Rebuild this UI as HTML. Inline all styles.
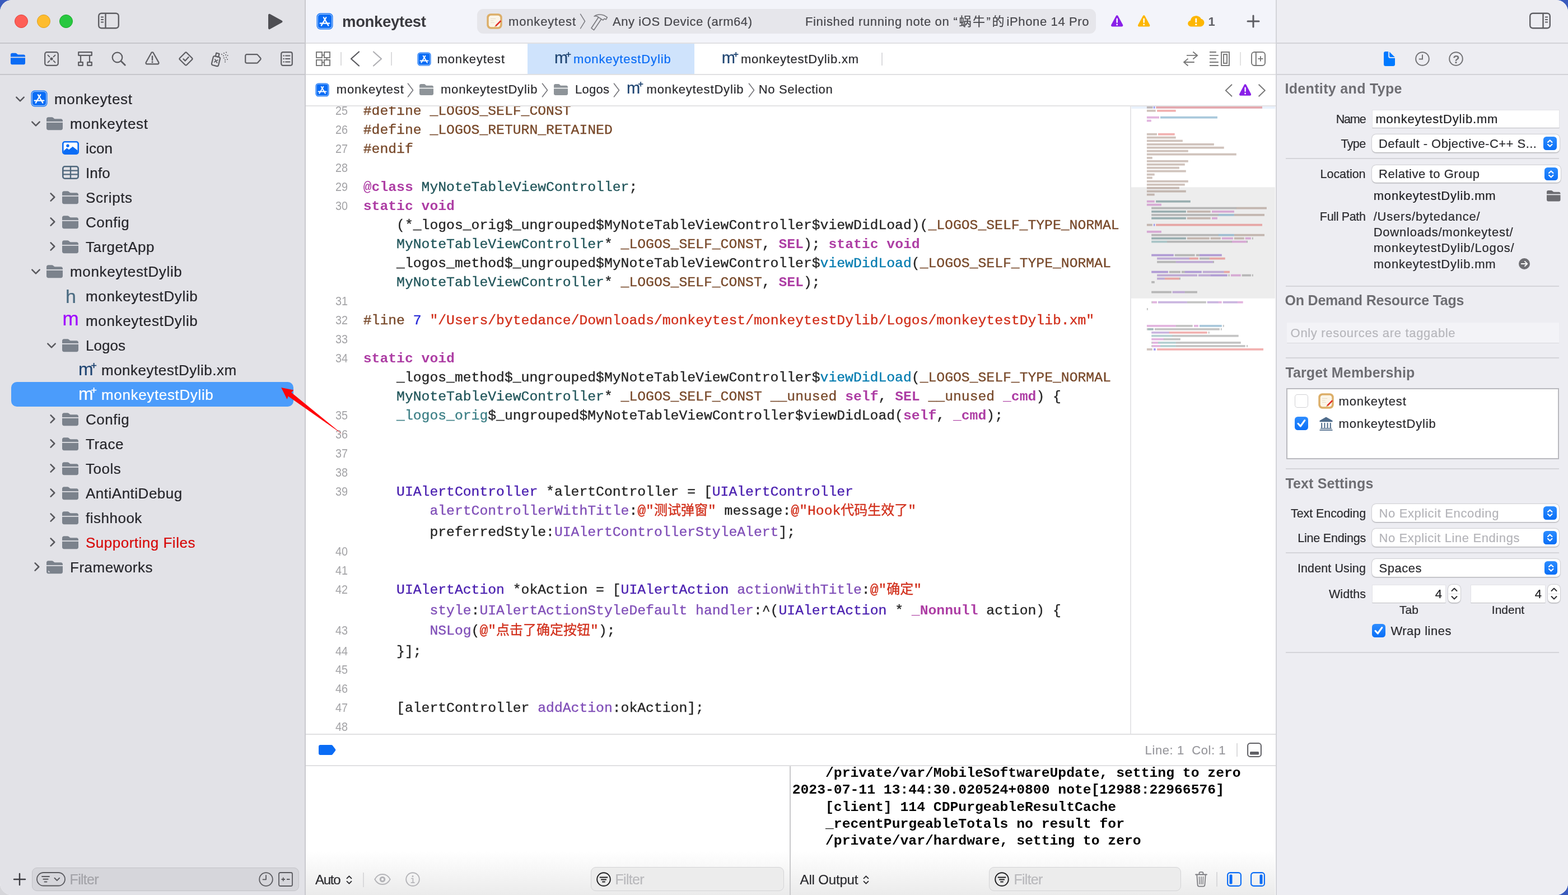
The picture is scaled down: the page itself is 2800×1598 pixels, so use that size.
<!DOCTYPE html>
<html lang="en"><head><meta charset="utf-8"><title>monkeytest — monkeytestDylib.mm</title>
<style>
:root{--mono:"Liberation Mono","Noto Sans CJK SC",monospace;}
html,body{margin:0;padding:0;}
body{width:2800px;height:1598px;overflow:hidden;position:relative;background:#3a5bbd;font-family:"Liberation Sans","Noto Sans CJK SC",sans-serif;}
#win{position:absolute;left:0;top:0;width:2800px;height:1598px;border-radius:21px;overflow:hidden;background:#fff;will-change:transform;}
#win div,#win span.t,#win svg{position:absolute;}
#win div{box-sizing:border-box;}
.t{white-space:pre;-webkit-text-stroke:0.220px;}
svg{overflow:visible;}
.code{font-family:var(--mono);font-size:24.72px;line-height:34px;white-space:pre;color:#262626;height:34px;-webkit-text-stroke:0.35px;}
.code span{position:static;}
.ln{font-size:22.500px;line-height:34px;color:#a3a3a6;text-align:right;width:60px;left:560.500px;transform:scaleX(0.880);transform-origin:100% 50%;}
.k{color:#ad3da4;font-weight:bold;-webkit-text-stroke:0;}
.p{color:#78492a;}
.c{color:#23575c;}
.f{color:#3e8087;}
.d{color:#047cb0;}
.s{color:#d12f1b;}
.n{color:#272ad8;}
.oc{color:#4b21b0;}
.of{color:#804fb8;}
.zh{font-size:24px;}
.con{font-family:var(--mono);font-size:24.72px;line-height:30px;white-space:pre;color:#000;font-weight:bold;}
</style></head><body><div style="position:absolute;left:0;top:1572px;width:26px;height:26px;background:#d6d6da;"></div><div id="win">
<div style="left:0px;top:0px;width:544px;height:1598px;background:#e2e2e7;"></div>
<div style="left:544px;top:0px;width:2px;height:1598px;background:#c9c9ce;"></div>
<div style="left:546px;top:0px;width:1732px;height:77px;background:#f3f4fa;"></div>
<div style="left:546px;top:77px;width:1732px;height:1521px;background:#fff;"></div>
<div style="left:2278px;top:0px;width:522px;height:1598px;background:#ededf2;"></div>
<div style="left:2278px;top:0px;width:2px;height:1598px;background:#d3d4d9;"></div>
<div style="left:0px;top:76px;width:544px;height:2px;background:#c6c6cb;"></div>
<div style="left:0px;top:132px;width:544px;height:2px;background:#c6c6cb;"></div>
<div style="left:546px;top:76px;width:1732px;height:2px;background:#e0e0e3;"></div>
<div style="left:546px;top:132px;width:1732px;height:2px;background:#e0e0e2;"></div>
<div style="left:546px;top:188px;width:1732px;height:2px;background:#e3e3e5;"></div>
<div style="left:2279px;top:76px;width:521px;height:2px;background:#d2d2d7;"></div>
<div style="left:2279px;top:132px;width:521px;height:2px;background:#d2d2d7;"></div>
<div style="left:26px;top:26px;width:24px;height:24px;border-radius:50%;background:#fe5f57;border:1px solid #e0443e;"></div>
<div style="left:66px;top:26px;width:24px;height:24px;border-radius:50%;background:#febc2e;border:1px solid #dea123;"></div>
<div style="left:106px;top:26px;width:24px;height:24px;border-radius:50%;background:#28c840;border:1px solid #1aab29;"></div>
<svg style="left:175px;top:22px;" width="38" height="30" viewBox="0 0 38 30"><rect x="1.2" y="1.7" width="35.6" height="26.6" rx="5" fill="none" stroke="#5e5e63" stroke-width="2.4"/><path d="M13.5 2v26" stroke="#5e5e63" stroke-width="2.4"/><path d="M5 8.5h5M5 13h5M5 17.5h5" stroke="#5e5e63" stroke-width="1.8"/></svg>
<svg style="left:478px;top:23.5px;" width="28" height="29" viewBox="0 0 28 29"><path d="M1 2.800c0-1.700 1.700-2.600 3.100-1.800l21.300 11.800c1.500.8 1.500 2.700 0 3.500L4.100 28.100c-1.400.8-3.100-.1-3.100-1.800z" fill="#4e4e53"/></svg>
<svg style="left:565px;top:23px;" width="30" height="30" viewBox="0 0 30 30"><rect x="0.5" y="0.5" width="29" height="29" rx="6.5" fill="#0a6cf5"/>
<rect x="2.3" y="2.3" width="25.4" height="25.4" rx="4.8" fill="none" stroke="#9cc6fb" stroke-width="1.3"/>
<g stroke="#fff" stroke-width="2.2" stroke-linecap="round" fill="none"><path d="M17.3 8.2 8.8 22.6"/><path d="M12.9 8.2 21.4 22.6"/><path d="M6.6 18.6h16.8"/></g></svg>
<span class="t" id="t0" style="top:20.97px;font-size:27.5px;line-height:36px;color:#3a3a3f;font-weight:700;-webkit-text-stroke:0;letter-spacing:-0.316px;left:611px;">monkeytest</span>
<div style="left:852px;top:16px;width:1105px;height:44px;background:#e6e6eb;border-radius:11px;"></div>
<svg style="left:869px;top:24px;" width="28" height="28" viewBox="0 0 28 28"><rect x="0.300" y="0.300" width="27.400" height="27.400" rx="7" fill="#dcae68"/>
<rect x="3.700" y="3.700" width="20.600" height="20.600" rx="4.200" fill="#fbf5e8"/>
<path d="M7.500 9.500h9M7.500 13h5M7.500 16.500h6.500" stroke="#dccfb6" stroke-width="1" stroke-dasharray="1.600 0.700"/>
<path d="M15.200 21.400 24.400 12.200 26.300 14.100 17.100 23.300z" fill="#df2a25"/><path d="M15.200 21.400 17.100 23.300 13.900 24.500z" fill="#d9a660"/></svg>
<span class="t" id="t1" style="top:23.68px;font-size:22px;line-height:29px;color:#47474c;letter-spacing:0.833px;left:908px;">monkeytest</span>
<svg style="left:1035px;top:24px;" width="11" height="28" viewBox="0 0 11 28"><path d="M1.5 1.2 9.5 14.0 1.5 26.8" fill="none" stroke="#7d7d82" stroke-width="1.5" stroke-linecap="round" stroke-linejoin="round"/></svg>
<svg style="left:1054.5px;top:24.5px;" width="31" height="30" viewBox="0 0 31 30"><g fill="none" stroke="#78787d" stroke-width="1.600" stroke-linejoin="round"><path d="M13.800 5.800 0.900 25.200 5.600 28.600 18.800 9"/><path d="M6 4C10 .6 18-.2 24.500 2.800l4.800 3.200-2.200 3.800-2.800-1.400-2.400 2.600-3.200-2-5.100-3.400C12 4 9 3.400 6 4z"/></g></svg>
<span class="t" id="t2" style="top:23.68px;font-size:22px;line-height:29px;color:#47474c;letter-spacing:0.562px;left:1094px;">Any iOS Device (arm64)</span>
<span class="t" id="t3" style="top:23.68px;font-size:22px;line-height:29px;color:#47474c;letter-spacing:0.632px;left:1438px;">Finished running note on</span>
<span class="t" id="t4" style="top:23.68px;font-size:22px;line-height:29px;color:#47474c;letter-spacing:2.586px;left:1702.5px;">“蜗牛”的</span>
<span class="t" id="t5" style="top:23.68px;font-size:22px;line-height:29px;color:#47474c;letter-spacing:0.630px;left:1797.5px;">iPhone 14 Pro</span>
<svg style="left:1984.3px;top:27.4px;" width="21.4" height="20.6" viewBox="0.400 0.700 21.200 19.600" preserveAspectRatio="none"><path d="M9.3 1.8c.8-1.3 2.6-1.3 3.4 0l8.6 15.4c.8 1.4-.2 3-1.7 3H2.4c-1.5 0-2.5-1.6-1.7-3z" fill="#8920e8"/>
<rect x="9.8" y="6" width="2.4" height="8" rx="1.2" fill="#fff"/><circle cx="11" cy="16.8" r="1.4" fill="#fff"/></svg>
<svg style="left:2032.4px;top:27.4px;" width="21.4" height="20.6" viewBox="0.400 0.700 21.200 19.600" preserveAspectRatio="none"><path d="M9.3 1.8c.8-1.3 2.6-1.3 3.4 0l8.6 15.4c.8 1.4-.2 3-1.7 3H2.4c-1.5 0-2.5-1.6-1.7-3z" fill="#fdb600"/>
<rect x="9.8" y="6" width="2.4" height="8" rx="1.2" fill="#fff"/><circle cx="11" cy="16.8" r="1.4" fill="#fff"/></svg>
<svg style="left:2121px;top:27.9px;" width="29.600" height="19.800" viewBox="0.300 0.800 29.400 22.400" preserveAspectRatio="none"><path d="M7.5 23C3.4 23 .5 20.2.5 16.6c0-3 2-5.400 4.800-6.200C5.900 5 9.800 1 15 1c4.200 0 7.700 2.500 9 6.300 3.200.7 5.500 3.700 5.500 7.300 0 4.700-3.400 8.400-7.600 8.400z" fill="#fdb600"/>
<rect x="13.700" y="6" width="2.6" height="9" rx="1.3" fill="#fff"/><circle cx="15" cy="18.600" r="1.700" fill="#fff"/></svg>
<span class="t" id="t6" style="top:24.18px;font-size:22px;line-height:29px;color:#606066;font-weight:700;-webkit-text-stroke:0;left:2157.5px;">1</span>
<svg style="left:2226px;top:26px;" width="24" height="24" viewBox="0 0 24 24"><path d="M12 2v20M2 12h20" stroke="#5c5c62" stroke-width="3" stroke-linecap="round"/></svg>
<svg style="left:2731px;top:22px;" width="38" height="30" viewBox="0 0 38 30"><rect x="1.2" y="1.7" width="35.6" height="26.6" rx="5" fill="none" stroke="#5e5e63" stroke-width="2.4"/><path d="M24.5 2v26" stroke="#5e5e63" stroke-width="2.4"/><path d="M28 8.5h5M28 13h5M28 17.5h5" stroke="#5e5e63" stroke-width="1.8"/></svg>
<svg style="left:19px;top:94px;" width="26" height="22" viewBox="0 0 29 23"><path d="M0 3.200C0 1.400 1.400 0 3.200 0h6.300c1 0 1.900.4 2.600 1.100l1.300 1.300c.5.500 1.100.700 1.800.700h10.600c1.800 0 3.200 1.400 3.200 3.200v1.400H0z" fill="#0a6cf5"/>
<path d="M0 9.600h29v10.200c0 1.800-1.400 3.200-3.200 3.200H3.200C1.400 23 0 21.600 0 19.800z" fill="#0a6cf5"/></svg>
<svg style="left:79px;top:92px;" width="26" height="26" viewBox="0 0 26 26"><rect x="1.200" y="1.200" width="23.600" height="23.600" rx="3.500" fill="none" stroke="#5e5e63" stroke-width="2.200" stroke-linecap="round" stroke-linejoin="round"/><circle cx="13" cy="13" r="2.600" fill="#5e5e63"/><path d="M6.500 6.500l3 3M19.500 6.500l-3 3M6.500 19.500l3-3M19.500 19.500l-3-3" stroke="#5e5e63" stroke-width="1.800" stroke-linecap="round"/></svg>
<svg style="left:139px;top:92px;" width="26" height="26" viewBox="0 0 26 26"><rect x="1.200" y="1.200" width="23.600" height="5.600" fill="none" stroke="#5e5e63" stroke-width="2.200" stroke-linecap="round" stroke-linejoin="round"/><rect x="1.200" y="19.200" width="7.600" height="5.600" fill="none" stroke="#5e5e63" stroke-width="2.200" stroke-linecap="round" stroke-linejoin="round"/><rect x="17.200" y="19.200" width="7.600" height="5.600" fill="none" stroke="#5e5e63" stroke-width="2.200" stroke-linecap="round" stroke-linejoin="round"/><path d="M5 7v12M21 7v12" fill="none" stroke="#5e5e63" stroke-width="2.200" stroke-linecap="round" stroke-linejoin="round"/></svg>
<svg style="left:199px;top:92px;" width="26" height="26" viewBox="0 0 26 26"><circle cx="10.500" cy="10.500" r="8.800" fill="none" stroke="#5e5e63" stroke-width="2.200" stroke-linecap="round" stroke-linejoin="round"/><path d="M17 17l7.300 7.300" stroke="#5e5e63" stroke-width="2.800" stroke-linecap="round"/></svg>
<svg style="left:259px;top:92px;" width="26" height="25" viewBox="0 0 26 25"><path d="M11.300 2.200c.8-1.300 2.600-1.300 3.400 0l9.600 17.200c.7 1.300-.2 2.900-1.700 2.900H3.400c-1.500 0-2.400-1.600-1.700-2.900z" fill="none" stroke="#5e5e63" stroke-width="2.200" stroke-linecap="round" stroke-linejoin="round"/><path d="M13 8.500v6.800" stroke="#5e5e63" stroke-width="2.400" stroke-linecap="round"/><circle cx="13" cy="18.800" r="1.500" fill="#5e5e63"/></svg>
<svg style="left:319px;top:92px;" width="26" height="26" viewBox="0 0 26 26"><path d="M11.500 2.200c.8-.8 2.200-.8 3 0l9.300 9.300c.8.8.8 2.200 0 3l-9.300 9.300c-.8.800-2.200.800-3 0l-9.300-9.300c-.8-.8-.8-2.200 0-3z" fill="none" stroke="#5e5e63" stroke-width="2.200" stroke-linecap="round" stroke-linejoin="round"/><path d="M8.500 13.400l3.200 3.200 6-6.600" fill="none" stroke="#5e5e63" stroke-width="2.200" stroke-linecap="round" stroke-linejoin="round"/></svg>
<svg style="left:377px;top:92px;" width="31" height="27" viewBox="0 0 31 27"><g transform="rotate(14 9 16)"><rect x="2.500" y="9" width="12.500" height="16.500" rx="2.500" fill="none" stroke="#5e5e63" stroke-width="2.200" stroke-linecap="round" stroke-linejoin="round"/><rect x="6" y="3" width="5.500" height="6" fill="none" stroke="#5e5e63" stroke-width="2.200" stroke-linecap="round" stroke-linejoin="round"/><path d="M6.500 14.500l5 5M11.500 14.500l-5 5" stroke="#5e5e63" stroke-width="1.800" stroke-linecap="round"/></g><g fill="#5e5e63"><circle cx="19" cy="5" r="1"/><circle cx="23" cy="3" r="1"/><circle cx="27" cy="1.500" r="1"/><circle cx="22" cy="7.500" r="1"/><circle cx="26" cy="6" r="1"/><circle cx="29.500" cy="7" r="1"/><circle cx="23" cy="11.500" r="1"/><circle cx="27" cy="10.500" r="1"/><circle cx="25" cy="15" r="1"/><circle cx="29" cy="14" r="1"/><circle cx="25" cy="18.500" r="1"/></g></svg>
<svg style="left:437px;top:96px;" width="30" height="18" viewBox="0 0 30 18"><path d="M3.700 1.200h17.600c.8 0 1.500.3 2 .9l4.900 5.600c.6.700.6 1.800 0 2.500l-4.900 5.600c-.5.600-1.200.9-2 .9H3.700c-1.400 0-2.500-1.100-2.500-2.500V3.700c0-1.400 1.100-2.500 2.500-2.500z" fill="none" stroke="#5e5e63" stroke-width="2.200" stroke-linecap="round" stroke-linejoin="round"/></svg>
<svg style="left:501px;top:92px;" width="22" height="26" viewBox="0 0 22 26"><rect x="1.200" y="1.200" width="19.600" height="23.600" rx="3" fill="none" stroke="#5e5e63" stroke-width="2.200" stroke-linecap="round" stroke-linejoin="round"/><path d="M9 7.500h7.500M9 13h7.500M9 18.500h7.500" stroke="#5e5e63" stroke-width="2" stroke-linecap="round"/><path d="M5.200 7.500h.9M5.200 13h.9M5.200 18.500h.9" stroke="#5e5e63" stroke-width="2" stroke-linecap="round"/></svg>
<svg style="left:28px;top:172px;" width="16" height="10" viewBox="0 0 16 10"><path d="M1.300 1.600 8 8.300 14.700 1.600" fill="none" stroke="#58585d" stroke-width="2.500" stroke-linecap="round" stroke-linejoin="round"/></svg>
<svg style="left:54.5px;top:161px;" width="30" height="30" viewBox="0 0 30 30"><rect x="0.5" y="0.5" width="29" height="29" rx="6.5" fill="#0a6cf5"/>
<rect x="2.3" y="2.3" width="25.4" height="25.4" rx="4.8" fill="none" stroke="#9cc6fb" stroke-width="1.3"/>
<g stroke="#fff" stroke-width="2.2" stroke-linecap="round" fill="none"><path d="M17.3 8.2 8.8 22.6"/><path d="M12.9 8.2 21.4 22.6"/><path d="M6.6 18.6h16.8"/></g></svg>
<span class="t" id="t7" style="top:159.59px;font-size:26px;line-height:34px;color:#26262b;letter-spacing:0.672px;left:97px;">monkeytest</span>
<svg style="left:56px;top:216px;" width="16" height="10" viewBox="0 0 16 10"><path d="M1.300 1.600 8 8.300 14.700 1.600" fill="none" stroke="#58585d" stroke-width="2.500" stroke-linecap="round" stroke-linejoin="round"/></svg>
<svg style="left:83px;top:208.7px;" width="29" height="23.4" viewBox="0 0 29 23"><path d="M0 3.200C0 1.400 1.400 0 3.200 0h6.300c1 0 1.900.4 2.600 1.100l1.300 1.300c.5.500 1.100.700 1.800.700h10.600c1.800 0 3.200 1.400 3.200 3.200v1.400H0z" fill="#7b828c"/>
<path d="M0 9.600h29v10.200c0 1.800-1.400 3.200-3.200 3.200H3.200C1.400 23 0 21.600 0 19.800z" fill="#7b828c"/></svg>
<span class="t" id="t8" style="top:203.59px;font-size:26px;line-height:34px;color:#26262b;letter-spacing:0.672px;left:125px;">monkeytest</span>
<svg style="left:110.5px;top:252px;" width="30" height="24" viewBox="0 0 30 24"><rect x="1.300" y="1.300" width="27.400" height="21.400" rx="3.500" fill="#fff" stroke="#0a6cf5" stroke-width="2.600"/>
<path d="M2.500 17.500 8.500 12.300 12 15.200 18.800 9.800 27.500 16.500V20.500c0 1-.8 1.800-1.800 1.800H4.300c-1 0-1.800-.8-1.800-1.800z" fill="#0a6cf5"/><circle cx="10" cy="8.300" r="2.700" fill="#0a6cf5"/></svg>
<span class="t" id="t9" style="top:247.59px;font-size:26px;line-height:34px;color:#26262b;letter-spacing:0.099px;left:153px;">icon</span>
<svg style="left:110.5px;top:296px;" width="30" height="24" viewBox="0 0 30 24"><rect x="1.300" y="1.300" width="27.400" height="21.400" rx="3.500" fill="none" stroke="#50687d" stroke-width="2.600"/>
<path d="M2 8.600h26M2 15.400h26M15 2v20" stroke="#50687d" stroke-width="2.300"/></svg>
<span class="t" id="t10" style="top:291.59px;font-size:26px;line-height:34px;color:#26262b;letter-spacing:0.108px;left:153px;">Info</span>
<svg style="left:89px;top:344px;" width="10" height="16" viewBox="0 0 10 16"><path d="M1.600 1.300 8.300 8 1.600 14.700" fill="none" stroke="#58585d" stroke-width="2.500" stroke-linecap="round" stroke-linejoin="round"/></svg>
<svg style="left:111px;top:340.7px;" width="29" height="23.4" viewBox="0 0 29 23"><path d="M0 3.200C0 1.400 1.400 0 3.200 0h6.300c1 0 1.900.4 2.600 1.100l1.300 1.300c.5.500 1.100.700 1.800.700h10.600c1.800 0 3.200 1.400 3.200 3.200v1.400H0z" fill="#7b828c"/>
<path d="M0 9.600h29v10.200c0 1.800-1.400 3.200-3.200 3.200H3.200C1.400 23 0 21.600 0 19.800z" fill="#7b828c"/></svg>
<span class="t" id="t11" style="top:335.59px;font-size:26px;line-height:34px;color:#26262b;letter-spacing:0.589px;left:153px;">Scripts</span>
<svg style="left:89px;top:388px;" width="10" height="16" viewBox="0 0 10 16"><path d="M1.600 1.300 8.300 8 1.600 14.700" fill="none" stroke="#58585d" stroke-width="2.500" stroke-linecap="round" stroke-linejoin="round"/></svg>
<svg style="left:111px;top:384.7px;" width="29" height="23.4" viewBox="0 0 29 23"><path d="M0 3.200C0 1.400 1.400 0 3.200 0h6.300c1 0 1.900.4 2.600 1.100l1.300 1.300c.5.500 1.100.700 1.800.700h10.600c1.800 0 3.200 1.400 3.200 3.200v1.400H0z" fill="#7b828c"/>
<path d="M0 9.600h29v10.200c0 1.800-1.400 3.200-3.200 3.200H3.200C1.400 23 0 21.600 0 19.800z" fill="#7b828c"/></svg>
<span class="t" id="t12" style="top:379.59px;font-size:26px;line-height:34px;color:#26262b;letter-spacing:0.500px;left:153px;">Config</span>
<svg style="left:89px;top:432px;" width="10" height="16" viewBox="0 0 10 16"><path d="M1.600 1.300 8.300 8 1.600 14.700" fill="none" stroke="#58585d" stroke-width="2.500" stroke-linecap="round" stroke-linejoin="round"/></svg>
<svg style="left:111px;top:428.7px;" width="29" height="23.4" viewBox="0 0 29 23"><path d="M0 3.200C0 1.400 1.400 0 3.200 0h6.300c1 0 1.900.4 2.600 1.100l1.300 1.300c.5.500 1.100.700 1.800.700h10.600c1.800 0 3.200 1.400 3.200 3.200v1.400H0z" fill="#7b828c"/>
<path d="M0 9.600h29v10.200c0 1.800-1.400 3.200-3.200 3.200H3.200C1.400 23 0 21.600 0 19.800z" fill="#7b828c"/></svg>
<span class="t" id="t13" style="top:423.59px;font-size:26px;line-height:34px;color:#26262b;letter-spacing:0.500px;left:153px;">TargetApp</span>
<svg style="left:56px;top:480px;" width="16" height="10" viewBox="0 0 16 10"><path d="M1.300 1.600 8 8.300 14.700 1.600" fill="none" stroke="#58585d" stroke-width="2.500" stroke-linecap="round" stroke-linejoin="round"/></svg>
<svg style="left:83px;top:472.7px;" width="29" height="23.4" viewBox="0 0 29 23"><path d="M0 3.200C0 1.400 1.400 0 3.200 0h6.300c1 0 1.900.4 2.600 1.100l1.300 1.300c.5.500 1.100.700 1.800.700h10.600c1.800 0 3.200 1.400 3.200 3.200v1.400H0z" fill="#7b828c"/>
<path d="M0 9.600h29v10.200c0 1.800-1.400 3.200-3.200 3.200H3.200C1.400 23 0 21.600 0 19.800z" fill="#7b828c"/></svg>
<span class="t" id="t14" style="top:467.59px;font-size:26px;line-height:34px;color:#26262b;letter-spacing:0.648px;left:125px;">monkeytestDylib</span>
<span class="t" id="t15" style="top:506.92px;font-size:34px;line-height:44px;color:#4a6b82;left:117px;">h</span>
<span class="t" id="t16" style="top:511.59px;font-size:26px;line-height:34px;color:#26262b;letter-spacing:0.648px;left:153px;">monkeytestDylib</span>
<span class="t" id="t17" style="top:545.67px;font-size:35px;line-height:46px;color:#a000ff;left:111.5px;letter-spacing:-1px;">m</span>
<span class="t" id="t18" style="top:555.59px;font-size:26px;line-height:34px;color:#26262b;letter-spacing:0.648px;left:153px;">monkeytestDylib</span>
<svg style="left:84px;top:612px;" width="16" height="10" viewBox="0 0 16 10"><path d="M1.300 1.600 8 8.300 14.700 1.600" fill="none" stroke="#58585d" stroke-width="2.500" stroke-linecap="round" stroke-linejoin="round"/></svg>
<svg style="left:111px;top:604.7px;" width="29" height="23.4" viewBox="0 0 29 23"><path d="M0 3.200C0 1.400 1.400 0 3.200 0h6.300c1 0 1.900.4 2.600 1.100l1.300 1.300c.5.500 1.100.700 1.800.700h10.600c1.800 0 3.200 1.400 3.200 3.200v1.400H0z" fill="#7b828c"/>
<path d="M0 9.600h29v10.200c0 1.800-1.400 3.200-3.200 3.200H3.200C1.400 23 0 21.600 0 19.800z" fill="#7b828c"/></svg>
<span class="t" id="t19" style="top:599.59px;font-size:26px;line-height:34px;color:#26262b;letter-spacing:0.039px;left:153px;">Logos</span>
<span class="t" id="t20" style="top:638.98px;font-size:31.8px;line-height:41px;color:#1f4572;left:140px;">m</span>
<svg style="left:163.2617px;top:648.24px;" width="9.222" height="9.222" viewBox="0 0 9.222 9.222"><path d="M4.61 0v9.22M0 4.61h9.22" stroke="#1f4572" stroke-width="1.91"/></svg>
<span class="t" id="t21" style="top:643.59px;font-size:26px;line-height:34px;color:#26262b;letter-spacing:0.500px;left:181px;">monkeytestDylib.xm</span>
<div style="left:20px;top:682px;width:504px;height:44px;background:#4b9cfb;border-radius:10px;"></div>
<span class="t" id="t22" style="top:682.98px;font-size:31.8px;line-height:41px;color:#fff;left:140px;">m</span>
<svg style="left:163.2617px;top:692.24px;" width="9.222" height="9.222" viewBox="0 0 9.222 9.222"><path d="M4.61 0v9.22M0 4.61h9.22" stroke="#fff" stroke-width="1.91"/></svg>
<span class="t" id="t23" style="top:687.59px;font-size:26px;line-height:34px;color:#fff;letter-spacing:0.648px;left:181px;">monkeytestDylib</span>
<svg style="left:89px;top:740px;" width="10" height="16" viewBox="0 0 10 16"><path d="M1.600 1.300 8.300 8 1.600 14.700" fill="none" stroke="#58585d" stroke-width="2.500" stroke-linecap="round" stroke-linejoin="round"/></svg>
<svg style="left:111px;top:736.7px;" width="29" height="23.4" viewBox="0 0 29 23"><path d="M0 3.200C0 1.400 1.400 0 3.200 0h6.300c1 0 1.900.4 2.600 1.100l1.300 1.300c.5.500 1.100.700 1.800.700h10.600c1.800 0 3.200 1.400 3.200 3.200v1.400H0z" fill="#7b828c"/>
<path d="M0 9.600h29v10.200c0 1.800-1.400 3.200-3.200 3.200H3.200C1.400 23 0 21.600 0 19.800z" fill="#7b828c"/></svg>
<span class="t" id="t24" style="top:731.59px;font-size:26px;line-height:34px;color:#26262b;letter-spacing:0.500px;left:153px;">Config</span>
<svg style="left:89px;top:784px;" width="10" height="16" viewBox="0 0 10 16"><path d="M1.600 1.300 8.300 8 1.600 14.700" fill="none" stroke="#58585d" stroke-width="2.500" stroke-linecap="round" stroke-linejoin="round"/></svg>
<svg style="left:111px;top:780.7px;" width="29" height="23.4" viewBox="0 0 29 23"><path d="M0 3.200C0 1.400 1.400 0 3.200 0h6.300c1 0 1.900.4 2.600 1.100l1.300 1.300c.5.500 1.100.700 1.800.700h10.600c1.800 0 3.200 1.400 3.200 3.200v1.400H0z" fill="#7b828c"/>
<path d="M0 9.600h29v10.200c0 1.800-1.400 3.200-3.200 3.200H3.200C1.400 23 0 21.600 0 19.800z" fill="#7b828c"/></svg>
<span class="t" id="t25" style="top:775.59px;font-size:26px;line-height:34px;color:#26262b;letter-spacing:0.500px;left:153px;">Trace</span>
<svg style="left:89px;top:828px;" width="10" height="16" viewBox="0 0 10 16"><path d="M1.600 1.300 8.300 8 1.600 14.700" fill="none" stroke="#58585d" stroke-width="2.500" stroke-linecap="round" stroke-linejoin="round"/></svg>
<svg style="left:111px;top:824.7px;" width="29" height="23.4" viewBox="0 0 29 23"><path d="M0 3.200C0 1.400 1.400 0 3.200 0h6.300c1 0 1.900.4 2.600 1.100l1.300 1.300c.5.500 1.100.700 1.800.700h10.600c1.800 0 3.200 1.400 3.200 3.200v1.400H0z" fill="#7b828c"/>
<path d="M0 9.600h29v10.200c0 1.800-1.400 3.200-3.200 3.200H3.200C1.400 23 0 21.600 0 19.800z" fill="#7b828c"/></svg>
<span class="t" id="t26" style="top:819.59px;font-size:26px;line-height:34px;color:#26262b;letter-spacing:0.500px;left:153px;">Tools</span>
<svg style="left:89px;top:872px;" width="10" height="16" viewBox="0 0 10 16"><path d="M1.600 1.300 8.300 8 1.600 14.700" fill="none" stroke="#58585d" stroke-width="2.500" stroke-linecap="round" stroke-linejoin="round"/></svg>
<svg style="left:111px;top:868.7px;" width="29" height="23.4" viewBox="0 0 29 23"><path d="M0 3.200C0 1.400 1.400 0 3.200 0h6.300c1 0 1.900.4 2.600 1.100l1.300 1.300c.5.500 1.100.700 1.800.700h10.600c1.800 0 3.200 1.400 3.200 3.200v1.400H0z" fill="#7b828c"/>
<path d="M0 9.600h29v10.200c0 1.800-1.400 3.200-3.200 3.200H3.200C1.400 23 0 21.600 0 19.800z" fill="#7b828c"/></svg>
<span class="t" id="t27" style="top:863.59px;font-size:26px;line-height:34px;color:#26262b;letter-spacing:0.500px;left:153px;">AntiAntiDebug</span>
<svg style="left:89px;top:916px;" width="10" height="16" viewBox="0 0 10 16"><path d="M1.600 1.300 8.300 8 1.600 14.700" fill="none" stroke="#58585d" stroke-width="2.500" stroke-linecap="round" stroke-linejoin="round"/></svg>
<svg style="left:111px;top:912.7px;" width="29" height="23.4" viewBox="0 0 29 23"><path d="M0 3.200C0 1.400 1.400 0 3.200 0h6.300c1 0 1.900.4 2.600 1.100l1.300 1.300c.5.500 1.100.700 1.800.700h10.600c1.800 0 3.200 1.400 3.200 3.200v1.400H0z" fill="#7b828c"/>
<path d="M0 9.600h29v10.200c0 1.800-1.400 3.200-3.200 3.200H3.200C1.400 23 0 21.600 0 19.800z" fill="#7b828c"/></svg>
<span class="t" id="t28" style="top:907.59px;font-size:26px;line-height:34px;color:#26262b;letter-spacing:0.500px;left:153px;">fishhook</span>
<svg style="left:89px;top:960px;" width="10" height="16" viewBox="0 0 10 16"><path d="M1.600 1.300 8.300 8 1.600 14.700" fill="none" stroke="#58585d" stroke-width="2.500" stroke-linecap="round" stroke-linejoin="round"/></svg>
<svg style="left:111px;top:956.7px;" width="29" height="23.4" viewBox="0 0 29 23"><path d="M0 3.200C0 1.400 1.400 0 3.200 0h6.300c1 0 1.900.4 2.600 1.100l1.300 1.300c.5.500 1.100.700 1.800.700h10.600c1.800 0 3.200 1.400 3.200 3.200v1.400H0z" fill="#7b828c"/>
<path d="M0 9.600h29v10.200c0 1.800-1.400 3.200-3.200 3.200H3.200C1.400 23 0 21.600 0 19.800z" fill="#7b828c"/></svg>
<span class="t" id="t29" style="top:951.59px;font-size:26px;line-height:34px;color:#d70a0a;letter-spacing:0.500px;left:153px;">Supporting Files</span>
<svg style="left:61px;top:1004px;" width="10" height="16" viewBox="0 0 10 16"><path d="M1.600 1.300 8.300 8 1.600 14.700" fill="none" stroke="#58585d" stroke-width="2.500" stroke-linecap="round" stroke-linejoin="round"/></svg>
<svg style="left:83px;top:1000.7px;" width="29" height="23.4" viewBox="0 0 29 23"><path d="M0 3.200C0 1.400 1.400 0 3.200 0h6.300c1 0 1.900.4 2.600 1.100l1.300 1.300c.5.500 1.100.700 1.800.700h10.600c1.800 0 3.200 1.400 3.200 3.200v1.400H0z" fill="#7b828c"/>
<path d="M0 9.600h29v10.200c0 1.800-1.400 3.200-3.200 3.200H3.200C1.400 23 0 21.600 0 19.800z" fill="#7b828c"/><path d="M3.200 17.200v3.400h3.400z" fill="#e2e2e7"/></svg>
<span class="t" id="t30" style="top:995.59px;font-size:26px;line-height:34px;color:#26262b;letter-spacing:0.500px;left:125px;">Frameworks</span>
<svg style="left:24px;top:1559px;" width="22" height="22" viewBox="0 0 22 22"><path d="M11 1v20M1 11h20" stroke="#3c3c41" stroke-width="2.400" stroke-linecap="round"/></svg>
<div style="left:57px;top:1549px;width:477px;height:42px;background:#d6d6db;border:1.500px solid #c3c3c8;border-radius:9px;"></div>
<svg style="left:65px;top:1557px;" width="52" height="26" viewBox="0 0 52 26"><rect x="1" y="1" width="50" height="23.500" rx="11.750" fill="none" stroke="#5a5a5f" stroke-width="1.800"/><path d="M10 8h13M12.300 12.800h8.400M14.500 17.500h4" stroke="#5a5a5f" stroke-width="1.900" stroke-linecap="round"/><path d="M32.500 10.800l4.300 4.300 4.300-4.300" fill="none" stroke="#5a5a5f" stroke-width="2" stroke-linecap="round" stroke-linejoin="round"/></svg>
<span class="t" id="t31" style="top:1554.34px;font-size:25px;line-height:32px;color:#a3a3a8;letter-spacing:-0.713px;left:124.6px;">Filter</span>
<svg style="left:462px;top:1557px;" width="26" height="26" viewBox="0 0 26 26"><circle cx="13" cy="13" r="11.800" fill="none" stroke="#5a5a5f" stroke-width="1.800"/><path d="M13 6v7.300H7.500" fill="none" stroke="#5a5a5f" stroke-width="1.800" stroke-linecap="round" stroke-linejoin="round"/></svg>
<svg style="left:497px;top:1557px;" width="26" height="26" viewBox="0 0 26 26"><rect x="1" y="1" width="24" height="24" rx="2.500" fill="none" stroke="#5a5a5f" stroke-width="1.800"/><path d="M5.500 13h6.500M8.750 9.750v6.500M15 13h5.500" stroke="#5a5a5f" stroke-width="1.800"/></svg>
<div class="ln" style="top:181.3px;">25</div>
<div class="code" style="left:648.75px;top:181px;"><span class="p">#define _LOGOS_SELF_CONST</span></div>
<div class="ln" style="top:215.3px;">26</div>
<div class="code" style="left:648.75px;top:215px;"><span class="p">#define _LOGOS_RETURN_RETAINED</span></div>
<div class="ln" style="top:249.3px;">27</div>
<div class="code" style="left:648.75px;top:249px;"><span class="p">#endif</span></div>
<div class="ln" style="top:283.3px;">28</div>
<div class="ln" style="top:317.3px;">29</div>
<div class="code" style="left:648.75px;top:317px;"><span class="k">@class</span> <span class="c">MyNoteTableViewController</span>;</div>
<div class="ln" style="top:351.3px;">30</div>
<div class="code" style="left:648.75px;top:351px;"><span class="k">static void</span></div>
<div class="code" style="left:708.08px;top:385px;">(*_logos_orig$_ungrouped$MyNoteTableViewController$viewDidLoad)(<span class="p">_LOGOS_SELF_TYPE_NORMAL</span></div>
<div class="code" style="left:708.08px;top:419px;"><span class="c">MyNoteTableViewController</span>* <span class="p">_LOGOS_SELF_CONST</span>, <span class="k">SEL</span>); <span class="k">static void</span></div>
<div class="code" style="left:708.08px;top:453px;">_logos_method$_ungrouped$MyNoteTableViewController$<span class="d">viewDidLoad</span>(<span class="p">_LOGOS_SELF_TYPE_NORMAL</span></div>
<div class="code" style="left:708.08px;top:487px;"><span class="c">MyNoteTableViewController</span>* <span class="p">_LOGOS_SELF_CONST</span>, <span class="k">SEL</span>);</div>
<div class="ln" style="top:521.3px;">31</div>
<div class="ln" style="top:555.3px;">32</div>
<div class="code" style="left:648.75px;top:555px;"><span class="p">#line </span><span class="n">7</span> <span class="s">"/Users/bytedance/Downloads/monkeytest/monkeytestDylib/Logos/monkeytestDylib.xm"</span></div>
<div class="ln" style="top:589.3px;">33</div>
<div class="ln" style="top:623.3px;">34</div>
<div class="code" style="left:648.75px;top:623px;"><span class="k">static void</span></div>
<div class="code" style="left:708.08px;top:657px;">_logos_method$_ungrouped$MyNoteTableViewController$<span class="d">viewDidLoad</span>(<span class="p">_LOGOS_SELF_TYPE_NORMAL</span></div>
<div class="code" style="left:708.08px;top:691px;"><span class="c">MyNoteTableViewController</span>* <span class="p">_LOGOS_SELF_CONST</span> <span class="p">__unused</span> <span class="k">self</span>, <span class="k">SEL</span> <span class="p">__unused</span> <span class="k">_cmd</span>) {</div>
<div class="ln" style="top:725.3px;">35</div>
<div class="code" style="left:708.08px;top:725px;"><span class="f">_logos_orig</span>$_ungrouped$MyNoteTableViewController$viewDidLoad(<span class="k">self</span>, <span class="k">_cmd</span>);</div>
<div class="ln" style="top:759.3px;">36</div>
<div class="ln" style="top:793.3px;">37</div>
<div class="ln" style="top:827.3px;">38</div>
<div class="ln" style="top:861.3px;">39</div>
<div class="code" style="left:708.08px;top:861px;"><span class="oc">UIAlertController</span> *alertController = [<span class="oc">UIAlertController</span></div>
<div class="code" style="left:767.41px;top:895px;"><span class="of">alertControllerWithTitle</span>:<span class="s">@"<span class="zh">测试弹窗</span>"</span> message:<span class="s">@"Hook<span class="zh">代码生效了</span>"</span></div>
<div class="code" style="left:767.41px;top:933px;">preferredStyle:<span class="of">UIAlertControllerStyleAlert</span>];</div>
<div class="ln" style="top:967.8px;">40</div>
<div class="ln" style="top:1001.8px;">41</div>
<div class="ln" style="top:1036.3px;">42</div>
<div class="code" style="left:708.08px;top:1036px;"><span class="oc">UIAlertAction</span> *okAction = [<span class="oc">UIAlertAction</span> <span class="of">actionWithTitle</span>:<span class="s">@"<span class="zh">确定</span>"</span></div>
<div class="code" style="left:767.41px;top:1073px;"><span class="of">style</span>:<span class="of">UIAlertActionStyleDefault</span> <span class="of">handler</span>:^(<span class="oc">UIAlertAction</span> * <span class="k">_Nonnull</span> action) {</div>
<div class="ln" style="top:1108.8px;">43</div>
<div class="code" style="left:767.41px;top:1108.5px;"><span class="of">NSLog</span>(<span class="s">@"<span class="zh">点击了确定按钮</span>"</span>);</div>
<div class="ln" style="top:1145.8px;">44</div>
<div class="code" style="left:708.08px;top:1145.5px;">}];</div>
<div class="ln" style="top:1179.3px;">45</div>
<div class="ln" style="top:1213.3px;">46</div>
<div class="ln" style="top:1247.3px;">47</div>
<div class="code" style="left:708.08px;top:1247px;">[alertController <span class="of">addAction</span>:okAction];</div>
<div class="ln" style="top:1281.3px;">48</div>
<div style="left:2018px;top:190px;width:2px;height:1121px;background:#e6e6e8;"></div>
<div style="left:546px;top:78px;width:1732px;height:54px;background:#fff;"></div>
<svg style="left:564px;top:92px;" width="26" height="26" viewBox="0 0 26 26"><rect x="1" y="1" width="10" height="10" fill="none" stroke="#777" stroke-width="1.900"/><rect x="15" y="1" width="10" height="10" fill="none" stroke="#777" stroke-width="1.900"/><rect x="1" y="15" width="10" height="10" fill="none" stroke="#777" stroke-width="1.900"/><rect x="15" y="15" width="10" height="10" fill="none" stroke="#777" stroke-width="1.900"/><path d="M15 6.500h-4M19.500 15v-4M11 19.500h4" fill="none" stroke="#777" stroke-width="1.900"/></svg>
<div style="left:608px;top:93px;width:2px;height:24px;background:#dcdcde;"></div>
<svg style="left:625px;top:91px;" width="18" height="28" viewBox="0 0 18 28"><path d="M16 1.500 2 14l14 12.500" fill="none" stroke="#5a5a5f" stroke-width="2.300" stroke-linecap="round" stroke-linejoin="round"/></svg>
<svg style="left:665px;top:91px;" width="18" height="28" viewBox="0 0 18 28"><path d="M2 1.500 16 14 2 26.500" fill="none" stroke="#b0b0b4" stroke-width="2.300" stroke-linecap="round" stroke-linejoin="round"/></svg>
<div style="left:698px;top:93px;width:2px;height:24px;background:#dcdcde;"></div>
<svg style="left:745px;top:93px;" width="25" height="25" viewBox="0 0 30 30"><rect x="0.5" y="0.5" width="29" height="29" rx="6.5" fill="#0a6cf5"/>
<rect x="2.3" y="2.3" width="25.4" height="25.4" rx="4.8" fill="none" stroke="#9cc6fb" stroke-width="1.3"/>
<g stroke="#fff" stroke-width="2.2" stroke-linecap="round" fill="none"><path d="M17.3 8.2 8.8 22.6"/><path d="M12.9 8.2 21.4 22.6"/><path d="M6.6 18.6h16.8"/></g></svg>
<span class="t" id="t32" style="top:91.48px;font-size:22px;line-height:29px;color:#2a2a2e;letter-spacing:0.889px;left:780.5px;">monkeytest</span>
<div style="left:942px;top:78px;width:298px;height:54px;background:#cfe3fc;"></div>
<span class="t" id="t33" style="top:83.95px;font-size:29px;line-height:38px;color:#1f4572;left:990px;">m</span>
<svg style="left:1011.2135000000001px;top:92.7px;" width="8.41" height="8.41" viewBox="0 0 8.41 8.41"><path d="M4.21 0v8.41M0 4.21h8.41" stroke="#1f4572" stroke-width="1.74"/></svg>
<span class="t" id="t34" style="top:91.48px;font-size:22px;line-height:29px;color:#0a6cf5;letter-spacing:0.879px;left:1024px;">monkeytestDylib</span>
<span class="t" id="t35" style="top:83.95px;font-size:29px;line-height:38px;color:#1f4572;left:1288.75px;">m</span>
<svg style="left:1309.9634999999998px;top:92.7px;" width="8.41" height="8.41" viewBox="0 0 8.41 8.41"><path d="M4.21 0v8.41M0 4.21h8.41" stroke="#1f4572" stroke-width="1.74"/></svg>
<span class="t" id="t36" style="top:91.48px;font-size:22px;line-height:29px;color:#2a2a2e;letter-spacing:0.774px;left:1323px;">monkeytestDylib.xm</span>
<div style="left:1574px;top:94px;width:2px;height:23px;background:#dcdcde;"></div>
<svg style="left:0;top:0;" width="2800" height="200" viewBox="0 0 2800 200"><g fill="none" stroke="#777777" stroke-width="1.900">
<path d="M2119 98.900h19M2130.400 92.600l7.700 6.300-7.700 6.500"/><path d="M2132.800 111h-18.600M2121.500 104.600l-7.400 6.400 7.400 6.500"/>
<path d="M2160 93h11.800M2160 98.900h15.800M2160 104.900h11.800M2160 111h15.800M2160 117h15.800"/>
<rect x="2181" y="93" width="14" height="24"/><rect x="2185" y="97" width="6" height="16"/>
<rect x="2235" y="93" width="24" height="24" rx="5"/><path d="M2242.800 93v24M2246.300 104.900h9.200M2250.900 100.300v9.200"/>
</g></svg>
<div style="left:2214px;top:93px;width:2px;height:24px;background:#e2e2e2;"></div>
<div style="left:546px;top:134px;width:1732px;height:54px;background:#fff;"></div>
<svg style="left:563px;top:148px;" width="25" height="25" viewBox="0 0 30 30"><rect x="0.5" y="0.5" width="29" height="29" rx="6.5" fill="#0a6cf5"/>
<rect x="2.3" y="2.3" width="25.4" height="25.4" rx="4.8" fill="none" stroke="#9cc6fb" stroke-width="1.3"/>
<g stroke="#fff" stroke-width="2.2" stroke-linecap="round" fill="none"><path d="M17.3 8.2 8.8 22.6"/><path d="M12.9 8.2 21.4 22.6"/><path d="M6.6 18.6h16.8"/></g></svg>
<span class="t" id="t37" style="top:145.48px;font-size:22px;line-height:29px;color:#2a2a2e;letter-spacing:0.833px;left:600.75px;">monkeytest</span>
<svg style="left:727px;top:148px;" width="12" height="26" viewBox="0 0 12 26"><path d="M1.5 1.2 10.5 13.0 1.5 24.8" fill="none" stroke="#77777c" stroke-width="1.7" stroke-linecap="round" stroke-linejoin="round"/></svg>
<svg style="left:749px;top:150px;" width="25" height="20" viewBox="0 0 29 23"><path d="M0 3.200C0 1.400 1.400 0 3.200 0h6.300c1 0 1.900.4 2.600 1.100l1.300 1.300c.5.500 1.100.700 1.800.700h10.600c1.800 0 3.200 1.400 3.200 3.200v1.400H0z" fill="#8e9499"/>
<path d="M0 9.600h29v10.200c0 1.800-1.400 3.200-3.200 3.200H3.200C1.400 23 0 21.600 0 19.800z" fill="#8e9499"/></svg>
<span class="t" id="t38" style="top:145.48px;font-size:22px;line-height:29px;color:#2a2a2e;letter-spacing:0.794px;left:787px;">monkeytestDylib</span>
<svg style="left:967px;top:148px;" width="12" height="26" viewBox="0 0 12 26"><path d="M1.5 1.2 10.5 13.0 1.5 24.8" fill="none" stroke="#77777c" stroke-width="1.7" stroke-linecap="round" stroke-linejoin="round"/></svg>
<svg style="left:989px;top:150px;" width="25" height="20" viewBox="0 0 29 23"><path d="M0 3.200C0 1.400 1.400 0 3.200 0h6.300c1 0 1.900.4 2.600 1.100l1.300 1.300c.5.500 1.100.700 1.800.700h10.600c1.800 0 3.200 1.400 3.200 3.200v1.400H0z" fill="#8e9499"/>
<path d="M0 9.600h29v10.200c0 1.800-1.400 3.200-3.200 3.200H3.200C1.400 23 0 21.600 0 19.800z" fill="#8e9499"/></svg>
<span class="t" id="t39" style="top:145.48px;font-size:22px;line-height:29px;color:#2a2a2e;letter-spacing:0.262px;left:1027px;">Logos</span>
<svg style="left:1095px;top:148px;" width="12" height="26" viewBox="0 0 12 26"><path d="M1.5 1.2 10.5 13.0 1.5 24.8" fill="none" stroke="#77777c" stroke-width="1.7" stroke-linecap="round" stroke-linejoin="round"/></svg>
<span class="t" id="t40" style="top:137.70px;font-size:29px;line-height:38px;color:#1f4572;left:1119px;">m</span>
<svg style="left:1140.2134999999998px;top:146.45px;" width="8.41" height="8.41" viewBox="0 0 8.41 8.41"><path d="M4.21 0v8.41M0 4.21h8.41" stroke="#1f4572" stroke-width="1.74"/></svg>
<span class="t" id="t41" style="top:145.48px;font-size:22px;line-height:29px;color:#2a2a2e;letter-spacing:0.829px;left:1154.6px;">monkeytestDylib</span>
<svg style="left:1336px;top:148px;" width="12" height="26" viewBox="0 0 12 26"><path d="M1.5 1.2 10.5 13.0 1.5 24.8" fill="none" stroke="#77777c" stroke-width="1.7" stroke-linecap="round" stroke-linejoin="round"/></svg>
<span class="t" id="t42" style="top:145.48px;font-size:22px;line-height:29px;color:#2a2a2e;letter-spacing:0.659px;left:1354.75px;">No Selection</span>
<svg style="left:0;top:0;" width="2800" height="200" viewBox="0 0 2800 200"><path d="M2200 150.800 2188.800 161.500 2200 172.200M2247.600 150.800 2258.800 161.500 2247.600 172.200" fill="none" stroke="#777" stroke-width="1.900"/></svg>
<svg style="left:2213.4px;top:150.2px;" width="21.2" height="20.8" viewBox="0.400 0.700 21.200 19.600" preserveAspectRatio="none"><path d="M9.3 1.8c.8-1.3 2.6-1.3 3.4 0l8.6 15.4c.8 1.4-.2 3-1.7 3H2.4c-1.5 0-2.5-1.6-1.7-3z" fill="#8920e8"/>
<rect x="9.8" y="6" width="2.4" height="8" rx="1.2" fill="#fff"/><circle cx="11" cy="16.8" r="1.4" fill="#fff"/></svg>
<div style="left:546px;top:132px;width:1732px;height:2px;background:#e0e0e2;"></div>
<div style="left:546px;top:188px;width:1732px;height:2px;background:#e3e3e5;"></div>
<svg style="left:2471px;top:92px;" width="20" height="26" viewBox="0 0 20 26"><path d="M3 0h5.200v9c0 1.500 1.200 2.700 2.700 2.700H20V23c0 1.700-1.300 3-3 3H3c-1.700 0-3-1.300-3-3V3c0-1.700 1.300-3 3-3z" fill="#0079ff"/><path d="M10.100 0.400 19.700 10h-7.600c-1.100 0-2-.9-2-2z" fill="#0079ff"/></svg>
<svg style="left:2527px;top:92px;" width="26" height="26" viewBox="0 0 26 26"><circle cx="13" cy="13" r="11.800" fill="none" stroke="#727275" stroke-width="2"/><path d="M13 5.500v8H6.800" fill="none" stroke="#727275" stroke-width="2" stroke-linejoin="miter"/></svg>
<svg style="left:2587px;top:92px;" width="26" height="26" viewBox="0 0 26 26"><circle cx="13" cy="13" r="11.800" fill="none" stroke="#727275" stroke-width="2"/></svg>
<div class="t" style="top:92.87px;font-size:20px;line-height:26px;color:#727275;font-weight:700;-webkit-text-stroke:0;left:2100.3px;width:1000px;text-align:center;"><span id="t43">?</span></div>
<span class="t" id="t44" style="top:141.74px;font-size:25px;line-height:32px;color:#6e6e73;font-weight:700;-webkit-text-stroke:0;letter-spacing:0.329px;left:2294.5px;">Identity and Type</span>
<span class="t" id="t45" style="top:198.85px;font-size:21.5px;line-height:28px;color:#2a2a2e;letter-spacing:-1.120px;right:361.5px;">Name</span>
<div style="left:2449.5px;top:195.5px;width:335px;height:33px;background:#fff;border:1px solid #e3e3e7;border-bottom:1.500px solid #bdbdc1;"></div>
<span class="t" id="t46" style="top:198.18px;font-size:22px;line-height:29px;color:#1d1d20;letter-spacing:0.814px;left:2456.4px;">monkeytestDylib.mm</span>
<span class="t" id="t47" style="top:243.05px;font-size:21.5px;line-height:28px;color:#2a2a2e;letter-spacing:-0.642px;right:361.5px;">Type</span>
<div style="left:2449.5px;top:240.3px;width:335px;height:32px;background:#fff;border-radius:7px;box-shadow:0 0.500px 2px rgba(0,0,0,.30),0 0 0 0.500px rgba(0,0,0,.08);"></div>
<span class="t" id="t48" style="top:242.48px;font-size:22px;line-height:29px;color:#2a2a2e;letter-spacing:0.481px;left:2462.0px;">Default - Objective-C++ S...</span>
<div style="left:2756.0px;top:244.3px;width:23.5px;height:23.5px;background:linear-gradient(#2c8cff,#0a6ff6);border-radius:5.500px;"></div>
<svg style="left:2756.0px;top:244.3px;" width="23.5" height="23.5" viewBox="0 0 23.5 23.5"><path d="M8 10 11.750 6.400 15.500 10M8 13.800 11.750 17.400 15.500 13.800" fill="none" stroke="#fff" stroke-width="2.100" stroke-linecap="round" stroke-linejoin="round"/></svg>
<div style="left:2295.5px;top:282px;width:488.5px;height:2px;background:#d4d4d9;"></div>
<span class="t" id="t49" style="top:297.05px;font-size:21.5px;line-height:28px;color:#2a2a2e;letter-spacing:-0.042px;right:361.5px;">Location</span>
<div style="left:2449.5px;top:294.5px;width:337px;height:31.5px;background:#fff;border-radius:7px;box-shadow:0 0.500px 2px rgba(0,0,0,.30),0 0 0 0.500px rgba(0,0,0,.08);"></div>
<span class="t" id="t50" style="top:296.43px;font-size:22px;line-height:29px;color:#2a2a2e;letter-spacing:0.550px;left:2462.0px;">Relative to Group</span>
<div style="left:2758.0px;top:298.5px;width:23.5px;height:23.5px;background:linear-gradient(#2c8cff,#0a6ff6);border-radius:5.500px;"></div>
<svg style="left:2758.0px;top:298.5px;" width="23.5" height="23.5" viewBox="0 0 23.5 23.5"><path d="M8 10 11.750 6.400 15.500 10M8 13.800 11.750 17.400 15.500 13.800" fill="none" stroke="#fff" stroke-width="2.100" stroke-linecap="round" stroke-linejoin="round"/></svg>
<span class="t" id="t51" style="top:335.38px;font-size:22px;line-height:29px;color:#1d1d20;letter-spacing:0.814px;left:2452.7px;">monkeytestDylib.mm</span>
<svg style="left:2761.5px;top:340.4px;" width="24.5" height="19.6" viewBox="0 0 29 23"><path d="M0 3.200C0 1.400 1.400 0 3.200 0h6.300c1 0 1.900.4 2.600 1.100l1.300 1.300c.5.500 1.100.700 1.800.700h10.600c1.800 0 3.200 1.400 3.200 3.200v1.400H0z" fill="#6c6c71"/>
<path d="M0 9.600h29v10.200c0 1.800-1.400 3.200-3.200 3.200H3.200C1.400 23 0 21.600 0 19.800z" fill="#6c6c71"/></svg>
<span class="t" id="t52" style="top:372.55px;font-size:21.5px;line-height:28px;color:#2a2a2e;letter-spacing:-0.357px;right:361.5px;">Full Path</span>
<span class="t" id="t53" style="top:371.88px;font-size:22px;line-height:29px;color:#2a2a2e;letter-spacing:0.793px;left:2452.7px;">/Users/bytedance/</span>
<span class="t" id="t54" style="top:400.18px;font-size:22px;line-height:29px;color:#2a2a2e;letter-spacing:0.772px;left:2452.7px;">Downloads/monkeytest/</span>
<span class="t" id="t55" style="top:428.48px;font-size:22px;line-height:29px;color:#2a2a2e;letter-spacing:0.830px;left:2452.7px;">monkeytestDylib/Logos/</span>
<span class="t" id="t56" style="top:456.78px;font-size:22px;line-height:29px;color:#2a2a2e;letter-spacing:0.814px;left:2452.7px;">monkeytestDylib.mm</span>
<svg style="left:2712px;top:460.5px;" width="20" height="20" viewBox="0 0 20 20"><circle cx="10" cy="10" r="10" fill="#6e6e73"/><path d="M4.800 10h10M11 5.800 15.200 10 11 14.200" fill="none" stroke="#fff" stroke-width="1.900" stroke-linecap="round" stroke-linejoin="round"/></svg>
<div style="left:2295.5px;top:510px;width:488.5px;height:2px;background:#d4d4d9;"></div>
<span class="t" id="t57" style="top:520.34px;font-size:25px;line-height:32px;color:#6e6e73;font-weight:700;-webkit-text-stroke:0;letter-spacing:-0.210px;left:2294.5px;">On Demand Resource Tags</span>
<div style="left:2297.7px;top:576px;width:486.5px;height:36.5px;background:#f3f3f7;border-bottom:1.500px solid #d9d9dd;"></div>
<span class="t" id="t58" style="top:579.88px;font-size:22px;line-height:29px;color:#b7b7bc;letter-spacing:0.678px;left:2304.6px;">Only resources are taggable</span>
<div style="left:2295.5px;top:638px;width:488.5px;height:2px;background:#d4d4d9;"></div>
<span class="t" id="t59" style="top:649.24px;font-size:25px;line-height:32px;color:#6e6e73;font-weight:700;-webkit-text-stroke:0;letter-spacing:0.141px;left:2295.4px;">Target Membership</span>
<div style="left:2296.6px;top:692.6px;width:487.2px;height:127px;background:#fff;border:2px solid #b9b9be;"></div>
<div style="left:2312.3px;top:704.4px;width:23.5px;height:23.5px;background:#fff;border-radius:5px;box-shadow:inset 0 0 0 1px #d0d0d4;"></div>
<svg style="left:2354px;top:702px;" width="28" height="28" viewBox="0 0 28 28"><rect x="0.300" y="0.300" width="27.400" height="27.400" rx="7" fill="#dcae68"/>
<rect x="3.700" y="3.700" width="20.600" height="20.600" rx="4.200" fill="#fbf5e8"/>
<path d="M7.500 9.500h9M7.500 13h5M7.500 16.500h6.500" stroke="#dccfb6" stroke-width="1" stroke-dasharray="1.600 0.700"/>
<path d="M15.200 21.400 24.400 12.200 26.300 14.100 17.100 23.300z" fill="#df2a25"/><path d="M15.200 21.400 17.100 23.300 13.900 24.500z" fill="#d9a660"/></svg>
<span class="t" id="t60" style="top:702.38px;font-size:22px;line-height:29px;color:#2a2a2e;letter-spacing:0.856px;left:2390.6px;">monkeytest</span>
<div style="left:2312.3px;top:744.4px;width:23.5px;height:23.5px;background:linear-gradient(#2e8dff,#0a6ff6);border-radius:5.500px;"></div>
<svg style="left:2312.3px;top:744.4px;" width="23.5" height="23.5" viewBox="0 0 23.5 23.5"><path d="M6 12.300 10.300 17 17.800 6.600" fill="none" stroke="#fff" stroke-width="3.100" stroke-linecap="round" stroke-linejoin="round"/></svg>
<svg style="left:2355px;top:743px;" width="26" height="26" viewBox="0 0 26 26"><path d="M13 1.500 24.500 8v2.300h-23V8z" fill="#4e6b8a"/><path d="M5.200 12v9M10.400 12v9M15.600 12v9M20.800 12v9" stroke="#4e6b8a" stroke-width="2"/><path d="M3 22h20M1.500 24.800h23" stroke="#4e6b8a" stroke-width="1.700"/></svg>
<span class="t" id="t61" style="top:742.38px;font-size:22px;line-height:29px;color:#2a2a2e;letter-spacing:0.836px;left:2390.6px;">monkeytestDylib</span>
<div style="left:2295.5px;top:836px;width:488.5px;height:2px;background:#d4d4d9;"></div>
<span class="t" id="t62" style="top:847.34px;font-size:25px;line-height:32px;color:#6e6e73;font-weight:700;-webkit-text-stroke:0;letter-spacing:0.156px;left:2295.4px;">Text Settings</span>
<span class="t" id="t63" style="top:902.55px;font-size:21.5px;line-height:28px;color:#2a2a2e;letter-spacing:-0.089px;right:361px;">Text Encoding</span>
<div style="left:2450px;top:900px;width:333.7px;height:31.5px;background:#fff;border-radius:7px;box-shadow:0 0.500px 2px rgba(0,0,0,.30),0 0 0 0.500px rgba(0,0,0,.08);"></div>
<span class="t" id="t64" style="top:901.93px;font-size:22px;line-height:29px;color:#b4b4b9;letter-spacing:0.643px;left:2462.5px;">No Explicit Encoding</span>
<div style="left:2756px;top:904px;width:23.5px;height:23.5px;background:linear-gradient(#2c8cff,#0a6ff6);border-radius:5.500px;"></div>
<svg style="left:2756px;top:904px;" width="23.5" height="23.5" viewBox="0 0 23.5 23.5"><path d="M8 10 11.750 6.400 15.500 10M8 13.800 11.750 17.400 15.500 13.800" fill="none" stroke="#fff" stroke-width="2.100" stroke-linecap="round" stroke-linejoin="round"/></svg>
<span class="t" id="t65" style="top:946.55px;font-size:21.5px;line-height:28px;color:#2a2a2e;letter-spacing:-0.212px;right:361px;">Line Endings</span>
<div style="left:2450px;top:944.4px;width:333.7px;height:31.5px;background:#fff;border-radius:7px;box-shadow:0 0.500px 2px rgba(0,0,0,.30),0 0 0 0.500px rgba(0,0,0,.08);"></div>
<span class="t" id="t66" style="top:946.33px;font-size:22px;line-height:29px;color:#b4b4b9;letter-spacing:0.598px;left:2462.5px;">No Explicit Line Endings</span>
<div style="left:2756px;top:948.4px;width:23.5px;height:23.5px;background:linear-gradient(#2c8cff,#0a6ff6);border-radius:5.500px;"></div>
<svg style="left:2756px;top:948.4px;" width="23.5" height="23.5" viewBox="0 0 23.5 23.5"><path d="M8 10 11.750 6.400 15.500 10M8 13.800 11.750 17.400 15.500 13.800" fill="none" stroke="#fff" stroke-width="2.100" stroke-linecap="round" stroke-linejoin="round"/></svg>
<div style="left:2295.5px;top:986px;width:488.5px;height:2px;background:#d4d4d9;"></div>
<span class="t" id="t67" style="top:1000.55px;font-size:21.5px;line-height:28px;color:#2a2a2e;letter-spacing:0.116px;right:361px;">Indent Using</span>
<div style="left:2450px;top:998px;width:336px;height:32px;background:#fff;border-radius:7px;box-shadow:0 0.500px 2px rgba(0,0,0,.30),0 0 0 0.500px rgba(0,0,0,.08);"></div>
<span class="t" id="t68" style="top:1000.18px;font-size:22px;line-height:29px;color:#2a2a2e;letter-spacing:0.522px;left:2462.5px;">Spaces</span>
<div style="left:2757.5px;top:1002px;width:23.5px;height:23.5px;background:linear-gradient(#2c8cff,#0a6ff6);border-radius:5.500px;"></div>
<svg style="left:2757.5px;top:1002px;" width="23.5" height="23.5" viewBox="0 0 23.5 23.5"><path d="M8 10 11.750 6.400 15.500 10M8 13.800 11.750 17.400 15.500 13.800" fill="none" stroke="#fff" stroke-width="2.100" stroke-linecap="round" stroke-linejoin="round"/></svg>
<span class="t" id="t69" style="top:1046.55px;font-size:21.5px;line-height:28px;color:#2a2a2e;letter-spacing:0.056px;right:361px;">Widths</span>
<div style="left:2450px;top:1044px;width:132px;height:32.5px;background:#fff;border:1px solid #e3e3e7;border-bottom:1.500px solid #bdbdc1;"></div>
<span class="t" id="t70" style="top:1046.38px;font-size:22px;line-height:29px;color:#1d1d20;right:225px;">4</span>
<div style="left:2586.4px;top:1044px;width:22px;height:32px;background:#fff;border-radius:7px;box-shadow:0 0.500px 2px rgba(0,0,0,.32),0 0 0 0.500px rgba(0,0,0,.08);"></div>
<div style="left:2587.4px;top:1059.5px;width:20px;height:1px;background:#e2e2e4;"></div>
<svg style="left:2586.4px;top:1044px;" width="22" height="32" viewBox="0 0 22 32"><path d="M6.500 11 11 6.500 15.500 11M6.500 21 11 25.500 15.500 21" fill="none" stroke="#2f2f33" stroke-width="2.100" stroke-linecap="round" stroke-linejoin="round"/></svg>
<div style="left:2625.5px;top:1044px;width:134.5px;height:32.5px;background:#fff;border:1px solid #e3e3e7;border-bottom:1.500px solid #bdbdc1;"></div>
<span class="t" id="t71" style="top:1046.38px;font-size:22px;line-height:29px;color:#1d1d20;right:47px;">4</span>
<div style="left:2764px;top:1044px;width:22px;height:32px;background:#fff;border-radius:7px;box-shadow:0 0.500px 2px rgba(0,0,0,.32),0 0 0 0.500px rgba(0,0,0,.08);"></div>
<div style="left:2765px;top:1059.5px;width:20px;height:1px;background:#e2e2e4;"></div>
<svg style="left:2764px;top:1044px;" width="22" height="32" viewBox="0 0 22 32"><path d="M6.500 11 11 6.500 15.500 11M6.500 21 11 25.500 15.500 21" fill="none" stroke="#2f2f33" stroke-width="2.100" stroke-linecap="round" stroke-linejoin="round"/></svg>
<div class="t" style="top:1075.22px;font-size:21px;line-height:27px;color:#2a2a2e;left:2016px;width:1000px;text-align:center;"><span id="t72">Tab</span></div>
<div class="t" style="top:1075.22px;font-size:21px;line-height:27px;color:#2a2a2e;left:2193px;width:1000px;text-align:center;"><span id="t73">Indent</span></div>
<div style="left:2450px;top:1114.3px;width:23.5px;height:23.5px;background:linear-gradient(#2e8dff,#0a6ff6);border-radius:5.500px;"></div>
<svg style="left:2450px;top:1114.3px;" width="23.5" height="23.5" viewBox="0 0 23.5 23.5"><path d="M6 12.300 10.300 17 17.800 6.600" fill="none" stroke="#fff" stroke-width="3.100" stroke-linecap="round" stroke-linejoin="round"/></svg>
<span class="t" id="t74" style="top:1112.38px;font-size:22px;line-height:29px;color:#2a2a2e;letter-spacing:0.497px;left:2483.4px;">Wrap lines</span>
<div style="left:2295.5px;top:1163.5px;width:488.5px;height:2px;background:#d4d4d9;"></div>
<div style="left:546px;top:1310px;width:1732px;height:2px;background:#e0e0e2;"></div>
<div style="left:546px;top:1366px;width:1732px;height:2px;background:#e0e0e2;"></div>
<div style="left:546px;top:1520px;width:1731px;height:78px;background:linear-gradient(#fff,#f6f6f6 45%,#ebebeb);"></div>
<div style="left:1410px;top:1368px;width:2px;height:230px;background:#c9c9cb;"></div>
<svg style="left:568.5px;top:1330px;" width="31" height="18" viewBox="0 0 31 18"><path d="M3 0h19.500c1 0 1.900.4 2.500 1.200l4.800 6.200c.7.900.7 2.200 0 3.100L25 16.800c-.6.800-1.500 1.200-2.500 1.200H3c-1.700 0-3-1.300-3-3V3c0-1.700 1.300-3 3-3z" fill="#0a6cf5"/></svg>
<span class="t" id="t75" style="top:1325.18px;font-size:22px;line-height:29px;color:#98989d;letter-spacing:0.589px;left:2044.6px;">Line: 1  Col: 1</span>
<div style="left:2208px;top:1327px;width:2px;height:24px;background:#dcdcde;"></div>
<svg style="left:2227px;top:1326px;" width="26" height="26" viewBox="0 0 26 26"><rect x="1.100" y="1.100" width="23.800" height="23.800" rx="4.500" fill="none" stroke="#5e5e63" stroke-width="2"/><rect x="5" y="16" width="16" height="5.500" rx="1.500" fill="#5e5e63"/></svg>
<div class="con" style="left:1474.03px;top:1365.40px;">/private/var/MobileSoftwareUpdate, setting to zero</div>
<div class="con" style="left:1414.70px;top:1395.45px;">2023-07-11 13:44:30.020524+0800 note[12988:22966576]</div>
<div class="con" style="left:1474.03px;top:1425.50px;">[client] 114 CDPurgeableResultCache</div>
<div class="con" style="left:1474.03px;top:1455.55px;">_recentPurgeableTotals no result for</div>
<div class="con" style="left:1474.03px;top:1485.60px;">/private/var/hardware, setting to zero</div>
<span class="t" id="t76" style="top:1555.18px;font-size:24px;line-height:31px;color:#2a2a2e;letter-spacing:-1.292px;left:563px;">Auto</span>
<svg style="left:618px;top:1561.5px;" width="11" height="18" viewBox="0 0 11 18"><path d="M1.500 6.300 5.500 2.300 9.500 6.300M1.500 11.700 5.500 15.700 9.500 11.700" fill="none" stroke="#2a2a2e" stroke-width="1.900" stroke-linecap="round" stroke-linejoin="round"/></svg>
<div style="left:648px;top:1558px;width:2px;height:26px;background:#d9d9db;"></div>
<svg style="left:668px;top:1558px;" width="30" height="24" viewBox="0 0 30 24"><path d="M1.300 12C4.500 6 9.300 3 15 3s10.500 3 13.700 9c-3.200 6-8 9-13.700 9S4.500 18 1.300 12z" fill="none" stroke="#b4b4b8" stroke-width="1.900"/><circle cx="15" cy="12" r="5.300" fill="#b4b4b8"/><circle cx="15" cy="12" r="2.200" fill="#f2f2f2"/></svg>
<svg style="left:723.5px;top:1557px;" width="26" height="26" viewBox="0 0 26 26"><circle cx="13" cy="13" r="11.800" fill="none" stroke="#b4b4b8" stroke-width="1.900"/><circle cx="13" cy="7.600" r="1.500" fill="#b4b4b8"/><path d="M10.800 11.500h2.600v7M10.300 18.800h5.600" fill="none" stroke="#b4b4b8" stroke-width="1.700" stroke-linecap="round"/></svg>
<div style="left:1054.5px;top:1548px;width:345px;height:43px;background:#ececec;border:1.500px solid #d4d4d6;border-radius:9px;"></div>
<svg style="left:1064.5px;top:1556.5px;" width="26" height="26" viewBox="0 0 26 26"><circle cx="13" cy="13" r="11.800" fill="none" stroke="#1d1d1f" stroke-width="1.900"/><path d="M6.500 9.500h13M8.800 13.500h8.400M11 17.500h4" stroke="#1d1d1f" stroke-width="1.900" stroke-linecap="round"/></svg>
<span class="t" id="t77" style="top:1553.64px;font-size:25px;line-height:32px;color:#b9b9bc;letter-spacing:-0.713px;left:1098.5px;">Filter</span>
<span class="t" id="t78" style="top:1555.18px;font-size:24px;line-height:31px;color:#2a2a2e;letter-spacing:-0.177px;left:1428.6px;">All Output</span>
<svg style="left:1541px;top:1561.5px;" width="11" height="18" viewBox="0 0 11 18"><path d="M1.500 6.300 5.500 2.300 9.500 6.300M1.500 11.700 5.500 15.700 9.500 11.700" fill="none" stroke="#2a2a2e" stroke-width="1.900" stroke-linecap="round" stroke-linejoin="round"/></svg>
<div style="left:1766.4px;top:1548px;width:343px;height:43px;background:#ececec;border:1.500px solid #d4d4d6;border-radius:9px;"></div>
<svg style="left:1776.4px;top:1556.5px;" width="26" height="26" viewBox="0 0 26 26"><circle cx="13" cy="13" r="11.800" fill="none" stroke="#1d1d1f" stroke-width="1.900"/><path d="M6.500 9.500h13M8.800 13.500h8.400M11 17.500h4" stroke="#1d1d1f" stroke-width="1.900" stroke-linecap="round"/></svg>
<span class="t" id="t79" style="top:1553.64px;font-size:25px;line-height:32px;color:#b9b9bc;letter-spacing:-0.713px;left:1810.4px;">Filter</span>
<svg style="left:2134px;top:1556px;" width="22" height="28" viewBox="0 0 22 28"><path d="M1 5.500h20M7.500 5V3c0-1 .8-1.800 1.800-1.800h3.400c1 0 1.800.8 1.800 1.800v2" fill="none" stroke="#7c7c80" stroke-width="1.800" stroke-linecap="round"/><path d="M3.300 6l1.300 18c.1 1.500 1.200 2.600 2.700 2.600h7.400c1.500 0 2.600-1.100 2.700-2.600L18.700 6" fill="none" stroke="#7c7c80" stroke-width="1.800"/><path d="M7.500 9.500l.5 13M11 9.500v13M14.500 9.500l-.5 13" stroke="#7c7c80" stroke-width="1.500" stroke-linecap="round"/></svg>
<div style="left:2172px;top:1557px;width:2px;height:26px;background:#d9d9db;"></div>
<svg style="left:2191px;top:1557px;" width="26" height="26" viewBox="0 0 26 26"><rect x="1.100" y="1.100" width="23.800" height="23.800" rx="4.500" fill="none" stroke="#0a6cf5" stroke-width="2.100"/><rect x="4.500" y="4.500" width="5" height="17" rx="1.500" fill="#0a6cf5"/></svg>
<svg style="left:2233px;top:1557px;" width="26" height="26" viewBox="0 0 26 26"><rect x="1.100" y="1.100" width="23.800" height="23.800" rx="4.500" fill="none" stroke="#0a6cf5" stroke-width="2.100"/><rect x="16.500" y="4.500" width="5" height="17" rx="1.500" fill="#0a6cf5"/></svg>
<svg style="left:0;top:0;" width="2800" height="1598" viewBox="0 0 2800 1598"><rect x="2020.5" y="190" width="256.500" height="4" fill="#e9f1fc"/><rect x="2020" y="334.300" width="257" height="198.500" fill="#ededed"/><rect x="2047.9" y="190.0" width="10.6" height="3.800" fill="rgba(100,56,32,.30)"/><rect x="2060.1" y="190.0" width="2.0" height="3.800" fill="rgba(40,20,230,.45)"/><rect x="2064.4" y="190.0" width="189.6" height="3.800" fill="rgba(220,40,36,.36)"/><rect x="2047.9" y="195.9" width="15.8" height="3.800" fill="rgba(100,56,32,.30)"/><rect x="2066.1" y="195.9" width="33.6" height="3.800" fill="rgba(220,40,36,.36)"/><rect x="2047.9" y="207.8" width="22.1" height="3.800" fill="rgba(175,50,165,.36)"/><rect x="2072.0" y="207.8" width="101.9" height="3.800" fill="rgba(30,110,160,.38)"/><rect x="2047.9" y="213.7" width="7.9" height="3.800" fill="rgba(175,50,165,.36)"/><rect x="2047.9" y="237.8" width="18.1" height="3.800" fill="rgba(100,56,32,.30)"/><rect x="2068.0" y="237.8" width="29.7" height="3.800" fill="rgba(220,40,36,.36)"/><rect x="2047.9" y="243.7" width="51.8" height="3.800" fill="rgba(100,56,32,.30)"/><rect x="2047.9" y="249.6" width="64.0" height="3.800" fill="rgba(100,56,32,.30)"/><rect x="2047.9" y="255.9" width="120.0" height="3.800" fill="rgba(100,56,32,.30)"/><rect x="2047.9" y="261.8" width="137.8" height="3.800" fill="rgba(100,56,32,.30)"/><rect x="2047.9" y="267.8" width="73.9" height="3.800" fill="rgba(100,56,32,.30)"/><rect x="2047.9" y="273.7" width="159.9" height="3.800" fill="rgba(100,56,32,.30)"/><rect x="2047.9" y="280.0" width="9.9" height="3.800" fill="rgba(100,56,32,.30)"/><rect x="2047.9" y="285.9" width="73.9" height="3.800" fill="rgba(100,56,32,.30)"/><rect x="2047.9" y="291.8" width="67.9" height="3.800" fill="rgba(100,56,32,.30)"/><rect x="2047.9" y="297.8" width="58.0" height="3.800" fill="rgba(100,56,32,.30)"/><rect x="2047.9" y="303.7" width="69.9" height="3.800" fill="rgba(100,56,32,.30)"/><rect x="2047.9" y="309.7" width="13.8" height="3.800" fill="rgba(100,56,32,.30)"/><rect x="2047.9" y="315.6" width="9.9" height="3.800" fill="rgba(100,56,32,.30)"/><rect x="2047.9" y="321.9" width="73.9" height="3.800" fill="rgba(100,56,32,.30)"/><rect x="2047.9" y="327.8" width="67.9" height="3.800" fill="rgba(100,56,32,.30)"/><rect x="2047.9" y="333.7" width="58.0" height="3.800" fill="rgba(100,56,32,.30)"/><rect x="2047.9" y="339.7" width="69.9" height="3.800" fill="rgba(100,56,32,.30)"/><rect x="2047.9" y="345.6" width="13.8" height="3.800" fill="rgba(100,56,32,.30)"/><rect x="2047.9" y="357.8" width="13.8" height="3.800" fill="rgba(175,50,165,.36)"/><rect x="2064.1" y="357.8" width="61.7" height="3.800" fill="rgba(28,80,84,.40)"/><rect x="2047.9" y="363.7" width="26.0" height="3.800" fill="rgba(175,50,165,.36)"/><rect x="2056.2" y="369.7" width="151.7" height="3.800" fill="rgba(0,0,0,.23)"/><rect x="2207.8" y="369.7" width="54.1" height="3.800" fill="rgba(100,56,32,.30)"/><rect x="2056.2" y="375.9" width="61.7" height="3.800" fill="rgba(28,80,84,.40)"/><rect x="2119.8" y="375.9" width="41.9" height="3.800" fill="rgba(100,56,32,.30)"/><rect x="2164.0" y="375.9" width="39.9" height="3.800" fill="rgba(175,50,165,.36)"/><rect x="2056.2" y="381.9" width="119.7" height="3.800" fill="rgba(0,0,0,.23)"/><rect x="2175.8" y="381.9" width="28.0" height="3.800" fill="rgba(30,110,160,.38)"/><rect x="2203.9" y="381.9" width="54.1" height="3.800" fill="rgba(100,56,32,.30)"/><rect x="2056.2" y="387.8" width="61.7" height="3.800" fill="rgba(28,80,84,.40)"/><rect x="2119.8" y="387.8" width="41.9" height="3.800" fill="rgba(100,56,32,.30)"/><rect x="2164.0" y="387.8" width="9.9" height="3.800" fill="rgba(175,50,165,.36)"/><rect x="2047.9" y="399.7" width="9.9" height="3.800" fill="rgba(100,56,32,.30)"/><rect x="2060.1" y="399.7" width="2.0" height="3.800" fill="rgba(40,20,230,.45)"/><rect x="2064.1" y="399.7" width="189.9" height="3.800" fill="rgba(220,40,36,.36)"/><rect x="2047.9" y="411.9" width="26.0" height="3.800" fill="rgba(175,50,165,.36)"/><rect x="2056.2" y="417.8" width="119.7" height="3.800" fill="rgba(0,0,0,.23)"/><rect x="2175.8" y="417.8" width="28.0" height="3.800" fill="rgba(30,110,160,.38)"/><rect x="2203.9" y="417.8" width="54.1" height="3.800" fill="rgba(100,56,32,.30)"/><rect x="2056.2" y="423.7" width="61.7" height="3.800" fill="rgba(28,80,84,.40)"/><rect x="2119.8" y="423.7" width="39.9" height="3.800" fill="rgba(100,56,32,.30)"/><rect x="2161.7" y="423.7" width="18.1" height="3.800" fill="rgba(100,56,32,.30)"/><rect x="2181.8" y="423.7" width="20.1" height="3.800" fill="rgba(175,50,165,.36)"/><rect x="2203.9" y="423.7" width="17.8" height="3.800" fill="rgba(100,56,32,.30)"/><rect x="2223.6" y="423.7" width="10.2" height="3.800" fill="rgba(175,50,165,.36)"/><rect x="2235.8" y="423.7" width="2.0" height="3.800" fill="rgba(0,0,0,.23)"/><rect x="2056.2" y="429.7" width="27.7" height="3.800" fill="rgba(50,125,130,.36)"/><rect x="2083.9" y="429.7" width="116.1" height="3.800" fill="rgba(0,0,0,.23)"/><rect x="2199.9" y="429.7" width="26.0" height="3.800" fill="rgba(175,50,165,.36)"/><rect x="2226.0" y="429.7" width="2.0" height="3.800" fill="rgba(0,0,0,.23)"/><rect x="2056.2" y="453.7" width="39.6" height="3.800" fill="rgba(70,10,170,.36)"/><rect x="2097.7" y="453.7" width="35.9" height="3.800" fill="rgba(0,0,0,.23)"/><rect x="2135.9" y="453.7" width="5.9" height="3.800" fill="rgba(0,0,0,.23)"/><rect x="2141.9" y="453.7" width="39.9" height="3.800" fill="rgba(70,10,170,.36)"/><rect x="2066.1" y="459.7" width="57.7" height="3.800" fill="rgba(108,54,169,.36)"/><rect x="2123.7" y="459.7" width="16.2" height="3.800" fill="rgba(220,40,36,.36)"/><rect x="2141.9" y="459.7" width="17.8" height="3.800" fill="rgba(0,0,0,.23)"/><rect x="2159.7" y="459.7" width="28.0" height="3.800" fill="rgba(220,40,36,.36)"/><rect x="2066.1" y="465.9" width="33.6" height="3.800" fill="rgba(0,0,0,.23)"/><rect x="2099.7" y="465.9" width="66.3" height="3.800" fill="rgba(108,54,169,.36)"/><rect x="2166.0" y="465.9" width="2.0" height="3.800" fill="rgba(0,0,0,.23)"/><rect x="2056.2" y="483.7" width="29.7" height="3.800" fill="rgba(70,10,170,.36)"/><rect x="2087.8" y="483.7" width="20.1" height="3.800" fill="rgba(0,0,0,.23)"/><rect x="2109.9" y="483.7" width="5.9" height="3.800" fill="rgba(0,0,0,.23)"/><rect x="2115.8" y="483.7" width="30.0" height="3.800" fill="rgba(70,10,170,.36)"/><rect x="2147.8" y="483.7" width="37.9" height="3.800" fill="rgba(108,54,169,.36)"/><rect x="2185.7" y="483.7" width="10.2" height="3.800" fill="rgba(220,40,36,.36)"/><rect x="2066.1" y="489.7" width="71.9" height="3.800" fill="rgba(108,54,169,.36)"/><rect x="2139.9" y="489.7" width="21.8" height="3.800" fill="rgba(108,54,169,.36)"/><rect x="2161.7" y="489.7" width="30.0" height="3.800" fill="rgba(70,10,170,.36)"/><rect x="2193.6" y="489.7" width="2.0" height="3.800" fill="rgba(0,0,0,.23)"/><rect x="2197.9" y="489.7" width="17.8" height="3.800" fill="rgba(175,50,165,.36)"/><rect x="2217.7" y="489.7" width="16.2" height="3.800" fill="rgba(0,0,0,.23)"/><rect x="2235.8" y="489.7" width="2.0" height="3.800" fill="rgba(0,0,0,.23)"/><rect x="2066.1" y="495.6" width="13.8" height="3.800" fill="rgba(108,54,169,.36)"/><rect x="2079.9" y="495.6" width="26.0" height="3.800" fill="rgba(220,40,36,.36)"/><rect x="2105.9" y="495.6" width="2.0" height="3.800" fill="rgba(0,0,0,.23)"/><rect x="2056.2" y="501.9" width="5.6" height="3.800" fill="rgba(0,0,0,.23)"/><rect x="2056.2" y="519.7" width="35.6" height="3.800" fill="rgba(0,0,0,.23)"/><rect x="2093.7" y="519.7" width="22.1" height="3.800" fill="rgba(108,54,169,.36)"/><rect x="2115.8" y="519.7" width="22.1" height="3.800" fill="rgba(0,0,0,.23)"/><rect x="2056.2" y="537.8" width="1.6" height="3.800" fill="rgba(0,0,0,.23)"/><rect x="2057.8" y="537.8" width="8.2" height="3.800" fill="rgba(175,50,165,.36)"/><rect x="2068.0" y="537.8" width="51.8" height="3.800" fill="rgba(108,54,169,.36)"/><rect x="2119.8" y="537.8" width="34.0" height="3.800" fill="rgba(0,0,0,.23)"/><rect x="2155.7" y="537.8" width="20.1" height="3.800" fill="rgba(108,54,169,.36)"/><rect x="2175.8" y="537.8" width="5.9" height="3.800" fill="rgba(175,50,165,.36)"/><rect x="2183.8" y="537.8" width="26.0" height="3.800" fill="rgba(108,54,169,.36)"/><rect x="2209.8" y="537.8" width="9.9" height="3.800" fill="rgba(175,50,165,.36)"/><rect x="2047.9" y="550.0" width="2.0" height="3.800" fill="rgba(0,0,0,.23)"/><rect x="2047.9" y="580.0" width="51.8" height="3.800" fill="rgba(175,50,165,.36)"/><rect x="2099.7" y="580.0" width="30.0" height="3.800" fill="rgba(0,0,0,.23)"/><rect x="2132.0" y="580.0" width="7.9" height="3.800" fill="rgba(175,50,165,.36)"/><rect x="2141.9" y="580.0" width="39.9" height="3.800" fill="rgba(30,110,160,.38)"/><rect x="2183.8" y="580.0" width="2.0" height="3.800" fill="rgba(0,0,0,.23)"/><rect x="2047.9" y="585.9" width="2.0" height="3.800" fill="rgba(0,0,0,.23)"/><rect x="2049.9" y="585.9" width="9.9" height="3.800" fill="rgba(28,80,84,.40)"/><rect x="2061.8" y="585.9" width="116.1" height="3.800" fill="rgba(0,0,0,.23)"/><rect x="2179.8" y="585.9" width="2.0" height="3.800" fill="rgba(0,0,0,.23)"/><rect x="2056.2" y="591.9" width="31.7" height="3.800" fill="rgba(108,54,169,.36)"/><rect x="2087.8" y="591.9" width="67.9" height="3.800" fill="rgba(220,40,36,.36)"/><rect x="2157.7" y="591.9" width="2.0" height="3.800" fill="rgba(0,0,0,.23)"/><rect x="2056.2" y="597.8" width="37.6" height="3.800" fill="rgba(50,125,130,.36)"/><rect x="2093.7" y="597.8" width="118.0" height="3.800" fill="rgba(0,0,0,.23)"/><rect x="2056.2" y="603.8" width="21.8" height="3.800" fill="rgba(175,50,165,.36)"/><rect x="2077.9" y="603.8" width="30.0" height="3.800" fill="rgba(0,0,0,.23)"/><rect x="2056.2" y="610.0" width="1.6" height="3.800" fill="rgba(0,0,0,.23)"/><rect x="2057.8" y="610.0" width="10.2" height="3.800" fill="rgba(175,50,165,.36)"/><rect x="2068.0" y="610.0" width="31.7" height="3.800" fill="rgba(50,125,130,.36)"/><rect x="2099.7" y="610.0" width="116.1" height="3.800" fill="rgba(0,0,0,.23)"/><rect x="2056.2" y="616.0" width="1.6" height="3.800" fill="rgba(0,0,0,.23)"/><rect x="2057.8" y="616.0" width="14.2" height="3.800" fill="rgba(175,50,165,.36)"/><rect x="2072.0" y="616.0" width="27.7" height="3.800" fill="rgba(50,125,130,.36)"/><rect x="2099.7" y="616.0" width="124.0" height="3.800" fill="rgba(0,0,0,.23)"/><rect x="2226.0" y="616.0" width="2.0" height="3.800" fill="rgba(0,0,0,.23)"/><rect x="2047.9" y="621.9" width="9.9" height="3.800" fill="rgba(100,56,32,.30)"/><rect x="2060.1" y="621.9" width="3.6" height="3.800" fill="rgba(40,20,230,.45)"/><rect x="2066.1" y="621.9" width="189.9" height="3.800" fill="rgba(220,40,36,.36)"/></svg>
<svg style="left:0;top:0;" width="2800" height="1598" viewBox="0 0 2800 1598"><polygon points="502.1,692.1 524.5,696.4 520.2,700.7 611.3,775.3 514.6,707.5 512.6,712.9" fill="#ff0008"/></svg>
</div></body></html>
